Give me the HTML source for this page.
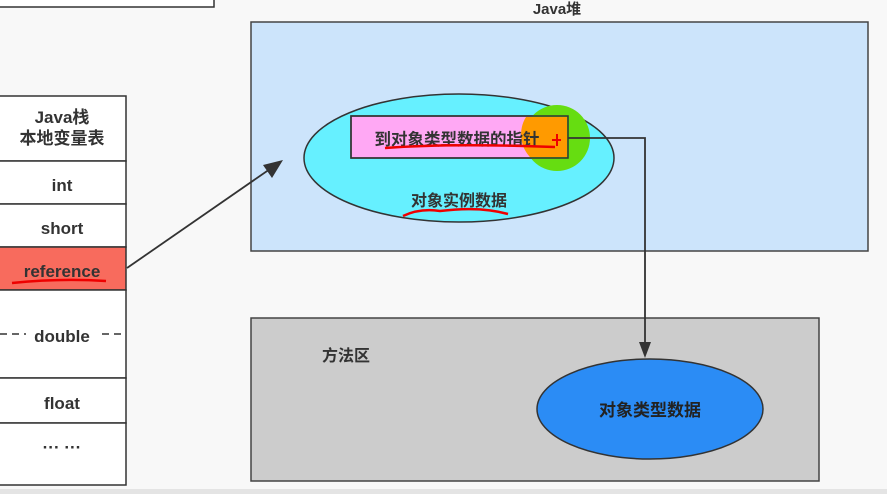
<!DOCTYPE html>
<html><head><meta charset="utf-8"><style>
body{margin:0;background:#f8f8f8;}
svg{display:block;font-family:"Liberation Sans","Noto Sans CJK SC",sans-serif;font-weight:bold;}
</style></head><body>
<svg width="887" height="494" viewBox="0 0 887 494">
<rect width="887" height="494" fill="#f8f8f8"/>
<rect x="-2" y="-2" width="216" height="9" fill="#fff" stroke="#333" stroke-width="1.5"/>
<g stroke="#333" stroke-width="1.5">
<rect x="-2" y="96" width="128" height="65" fill="#fff"/>
<rect x="-2" y="161" width="128" height="43" fill="#fff"/>
<rect x="-2" y="204" width="128" height="43" fill="#fff"/>
<rect x="-2" y="247" width="128" height="43" fill="#f86b5d"/>
<rect x="-2" y="290" width="128" height="88" fill="#fff"/>
<rect x="-2" y="378" width="128" height="45" fill="#fff"/>
<rect x="-2" y="423" width="128" height="62" fill="#fff"/>
</g>
<line x1="0" y1="334" x2="26" y2="334" stroke="#333" stroke-width="1.5" stroke-dasharray="7,5"/>
<line x1="102" y1="334" x2="126" y2="334" stroke="#333" stroke-width="1.5" stroke-dasharray="7,5"/>
<g fill="#333" font-size="17" text-anchor="middle">
<text x="62" y="123">Java栈</text>
<text x="62" y="144">本地变量表</text>
<text x="62" y="191">int</text>
<text x="62" y="234">short</text>
<text x="62" y="277">reference</text>
<text x="62" y="342">double</text>
<text x="62" y="409">float</text>
<text x="62" y="453">··· ···</text>
</g>
<path d="M12 283 Q60 278 106 281" stroke="#e00" stroke-width="2.5" fill="none"/>
<text x="557" y="14" font-size="15" fill="#333" text-anchor="middle">Java堆</text>
<rect x="251" y="22" width="617" height="229" fill="#cce4fb" stroke="#444" stroke-width="1.5"/>
<ellipse cx="459" cy="158" rx="155" ry="64" fill="#66f0ff" stroke="#333" stroke-width="1.5"/>
<rect x="351" y="116" width="217" height="42" fill="#ffa8f4" stroke="#333" stroke-width="1.5"/>
<circle cx="557" cy="138" r="33" fill="#66dd11"/>
<path d="M526 117 L567 117 L567 157 L530 157 A33 33 0 0 1 526 117 Z" fill="#ff9a00"/>
<rect x="351" y="116" width="217" height="42" fill="none" stroke="#333" stroke-width="1.5"/>
<text x="457" y="145" font-size="16.5" fill="#333" text-anchor="middle">到对象类型数据的指针</text>
<path d="M385 148 Q450 143 555 147" stroke="#e00" stroke-width="2.5" fill="none"/>
<path d="M552 140 L561 140 M557 134 L557 146" stroke="#e00" stroke-width="2"/>
<text x="459" y="206" font-size="16" fill="#333" text-anchor="middle">对象实例数据</text>
<path d="M403 216 Q420 208 440 211 Q480 206 508 214" stroke="#e00" stroke-width="2.5" fill="none"/>
<rect x="251" y="318" width="568" height="163" fill="#cccccc" stroke="#444" stroke-width="1.5"/>
<text x="346" y="361" font-size="16" fill="#333" text-anchor="middle">方法区</text>
<ellipse cx="650" cy="409" rx="113" ry="50" fill="#2b8cf5" stroke="#333" stroke-width="1.5"/>
<text x="650" y="416" font-size="17" fill="#222" text-anchor="middle">对象类型数据</text>
<line x1="127" y1="268" x2="270" y2="169" stroke="#333" stroke-width="1.8"/>
<polygon points="283,160 263,165 272,178" fill="#333"/>
<polyline points="568,138 645,138 645,345" fill="none" stroke="#333" stroke-width="1.8"/>
<polygon points="639,342 651,342 645,358" fill="#333"/>
<rect x="0" y="489" width="887" height="5" fill="#e4e4e4"/>
</svg>
</body></html>
